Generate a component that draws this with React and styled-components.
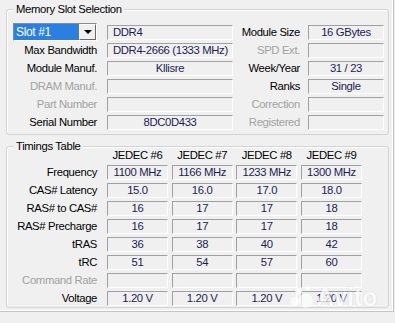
import styled, { createGlobalStyle } from "styled-components";

const GlobalStyle = createGlobalStyle`
  html, body {
    margin: 0;
    padding: 0;
    background: #f0f0f0;
  }
  body {
    font-family: "Liberation Sans", Arial, sans-serif;
    font-size: 11.3px;
    letter-spacing: -0.35px;
  }
`;

const Screen = styled.div`
  position: relative;
  width: 395px;
  height: 323px;
  overflow: hidden;
  background: #f0f0f0;
`;

const Panel = styled.div`
  width: 394px;
  height: 312px;
  box-sizing: border-box;
  padding: 9px 0 0 6px;
  border-right: 1px solid #c4c4c4;
  border-bottom: 1px solid #c4c4c4;
  box-shadow: inset -1px -1px 0 #ffffff;
`;

const Group = styled.div`
  position: relative;
  width: 383px;
  box-sizing: border-box;
  margin-top: ${(p) => p.$mt || 0}px;
  padding: ${(p) => p.$pt}px 4px ${(p) => p.$pb}px 0;
  border: 1px solid #d3d3d3;
  border-radius: 3px;
  box-shadow: inset 1px 1px 0 #ffffff;
`;

const Title = styled.div`
  position: absolute;
  top: -7px;
  left: 7px;
  padding: 0 2px;
  line-height: 13px;
  background: #f0f0f0;
  color: #000;
`;

const SlotGrid = styled.div`
  display: grid;
  grid-template-columns: 100px 126px 75px 76px;
  grid-auto-rows: 18px;
  align-items: center;
`;

const TimingGrid = styled.div`
  display: grid;
  grid-template-columns: 96.33px repeat(4, 61px);
  column-gap: 3.67px;
  grid-template-rows: 16px;
  grid-auto-rows: 18px;
  align-items: center;
`;

const Label = styled.div`
  text-align: right;
  padding-right: ${(p) => p.$pr}px;
  line-height: 13px;
  white-space: nowrap;
  color: ${(p) => (p.$dim ? "#a2a2a2" : "#000")};
`;

const Field = styled.div`
  height: 15px;
  box-sizing: border-box;
  padding: 0 5px;
  border-top: 1px solid #a0a0a0;
  border-left: 1px solid #a0a0a0;
  border-right: 1px solid #ffffff;
  border-bottom: 1px solid #ffffff;
  line-height: 13px;
  white-space: nowrap;
  overflow: hidden;
  color: #1c1c52;
  text-align: ${(p) => (p.$left ? "left" : "center")};
`;

const Header = styled.div`
  text-align: center;
  line-height: 13px;
  color: #000;
`;

const Combo = styled.div`
  display: flex;
  height: 18px;
  margin: 0 10px 0 6px;
  box-sizing: border-box;
  border: 1px solid;
  border-color: #8a8a8a #ffffff #ffffff #8a8a8a;
  background: #fff;
`;

const ComboText = styled.div`
  flex: 1;
  padding-left: 2px;
  line-height: 16px;
  font-size: 12px;
  background: #2a7fe0;
  color: #fff;
`;

const ComboButton = styled.div`
  width: 17px;
  box-sizing: border-box;
  display: flex;
  align-items: center;
  justify-content: center;
  background: #f0f0f0;
  border: 1px solid;
  border-color: #ffffff #6a6a6a #6a6a6a #ffffff;
`;

const Arrow = styled.span`
  width: 0;
  height: 0;
  border-left: 4px solid transparent;
  border-right: 4px solid transparent;
  border-top: 4px solid #000;
`;

const Watermark = styled.div`
  position: absolute;
  left: 288px;
  top: 284px;
  display: flex;
  align-items: center;
  gap: 2px;
  opacity: 0.7;
  pointer-events: none;
`;

const WatermarkText = styled.span`
  font-family: "Liberation Sans", Arial, sans-serif;
  font-size: 25px;
  line-height: 26px;
  font-weight: bold;
  letter-spacing: 0;
  color: #ffffff;
  text-shadow: 0 0 1px #b0b0b0;
`;

const leftRows = [
  ["Max Bandwidth", "DDR4-2666 (1333 MHz)", false, "SPD Ext.", "", true],
  ["Module Manuf.", "Kllisre", false, "Week/Year", "31 / 23", false],
  ["DRAM Manuf.", "", true, "Ranks", "Single", false],
  ["Part Number", "", true, "Correction", "", true],
  ["Serial Number", "8DC0D433", false, "Registered", "", true],
];

const timings = [
  ["Frequency", ["1100 MHz", "1166 MHz", "1233 MHz", "1300 MHz"]],
  ["CAS# Latency", ["15.0", "16.0", "17.0", "18.0"]],
  ["RAS# to CAS#", ["16", "17", "17", "18"]],
  ["RAS# Precharge", ["16", "17", "17", "18"]],
  ["tRAS", ["36", "38", "40", "42"]],
  ["tRC", ["51", "54", "57", "60"]],
  ["Command Rate", ["", "", "", ""], true],
  ["Voltage", ["1.20 V", "1.20 V", "1.20 V", "1.20 V"]],
];

export default function App() {
  return (
    <>
      <GlobalStyle />
      <Screen>
        <Panel>
          <Group $pt={13} $pb={3}>
            <Title>Memory Slot Selection</Title>
            <SlotGrid>
              <Combo>
                <ComboText>Slot #1</ComboText>
                <ComboButton>
                  <Arrow />
                </ComboButton>
              </Combo>
              <Field $left>DDR4</Field>
              <Label $pr={8}>Module Size</Label>
              <Field>16 GBytes</Field>
              {leftRows.map(([l, v, dim, rl, rv, rdim]) => (
                <>
                  <Label key={l} $pr={10} $dim={dim}>
                    {l}
                  </Label>
                  <Field $left={l === "Max Bandwidth"}>{v}</Field>
                  <Label $pr={8} $dim={rdim}>
                    {rl}
                  </Label>
                  <Field>{rv}</Field>
                </>
              ))}
            </SlotGrid>
          </Group>
          <Group $mt={11} $pt={0} $pb={0}>
            <Title>Timings Table</Title>
            <TimingGrid>
              <div />
              <Header>JEDEC #6</Header>
              <Header>JEDEC #7</Header>
              <Header>JEDEC #8</Header>
              <Header>JEDEC #9</Header>
              {timings.map(([l, vals, dim]) => (
                <>
                  <Label key={l} $pr={6.33} $dim={dim}>
                    {l}
                  </Label>
                  {vals.map((v, i) => (
                    <Field key={i}>{v}</Field>
                  ))}
                </>
              ))}
            </TimingGrid>
          </Group>
        </Panel>
        <Watermark>
          <svg width="26" height="24" viewBox="0 0 22 20">
            <circle cx="15" cy="13" r="6" fill="#fff" />
            <circle cx="6" cy="14" r="4" fill="#fff" />
            <circle cx="9" cy="5" r="3" fill="#fff" />
            <circle cx="17" cy="3" r="2" fill="#fff" />
          </svg>
          <WatermarkText>Avito</WatermarkText>
        </Watermark>
      </Screen>
    </>
  );
}
